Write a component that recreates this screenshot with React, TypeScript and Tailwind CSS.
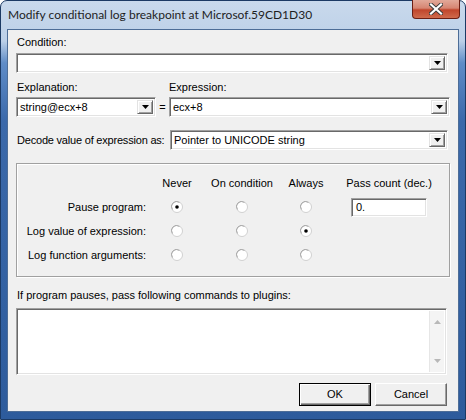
import React from "react";

const body = { fontFamily: '"Liberation Sans", Arial, sans-serif' };

const DropArrow = () => (
    <div className="w-[16px] h-full bg-[#f0f0f0] border border-t-[#e3e3e3] border-l-[#e3e3e3] border-r-[#696969] border-b-[#696969] shadow-[inset_1px_1px_0_#ffffff,inset_-1px_-1px_0_#a0a0a0] flex items-center justify-center">
        <svg width="7" height="4" viewBox="0 0 7 4">
            <path d="M0 0h7L3.5 4z" fill="#000" />
        </svg>
    </div>
);

const Combo = ({ value = "", className = "" }: { value?: string; className?: string }) => (
    <div
        className={`h-[20px] bg-white border border-t-[#a0a0a0] border-l-[#a0a0a0] border-r-white border-b-white shadow-[inset_1px_1px_0_#696969,inset_-1px_-1px_0_#e3e3e3] flex items-stretch p-[2px] ${className}`}
    >
        <span className="flex-1 text-[11px] leading-[14px] text-black pl-[1px] truncate">{value}</span>
        <DropArrow />
    </div>
);

const Radio = ({ checked = false }: { checked?: boolean }) => (
    <svg width="12" height="12" viewBox="0 0 12 12">
        <circle cx="6" cy="6" r="5.5" fill="#ffffff" stroke="#d0d0d0" />
        <path d="M1.5 8.5A5 5 0 0 1 8.5 1.5" fill="none" stroke="#a8a8a8" />
        {checked && <circle cx="6" cy="6" r="1.8" fill="#000" />}
    </svg>
);

const rows = [
    { label: "Pause program:", pick: 0, pass: true },
    { label: "Log value of expression:", pick: 2, pass: false },
    { label: "Log function arguments:", pick: -1, pass: false },
];

const Button = ({ label, primary = false }: { label: string; primary?: boolean }) => (
    <div
        className={`w-[72px] h-[23px] bg-[#f0f0f0] flex items-center justify-center text-[11px] text-black ${
            primary
                ? "border border-[#000000] shadow-[inset_1px_1px_0_#ffffff,inset_-1px_-1px_0_#696969,inset_-2px_-2px_0_#a0a0a0]"
                : "border border-t-white border-l-white border-r-[#696969] border-b-[#696969] shadow-[inset_-1px_-1px_0_#a0a0a0]"
        }`}
    >
        {label}
    </div>
);

export default function App() {
    return (
        <div className="w-[466px] h-[420px] bg-white">
            <div className="w-[466px] h-[420px] rounded-t-[7px] border border-[#1c3a64] bg-[linear-gradient(to_bottom,#c9d9ec_0px,#bcd0e8_40px,#5f8cc7_62px,#3b69aa_120px,#2d5b9c_420px)] flex flex-col">
                <div className="h-[28px] flex items-start justify-between pl-[7px] pr-[5px]">
                    <span
                        className="mt-[6px] text-[12px] leading-[16px] text-[#1e1e1e] whitespace-nowrap"
                        style={{ fontFamily: 'Lato, "Noto Sans", sans-serif' }}
                    >
                        Modify conditional log breakpoint at Microsof.59CD1D30
                    </span>
                    <div className="w-[48px] h-[19px] -mt-[1px] rounded-b-[4px] border border-[#6b1f14] border-t-0 bg-[linear-gradient(to_bottom,#e2a999_0%,#d68572_45%,#c0462c_55%,#cf6a4c_100%)] flex items-center justify-center">
                        <svg width="14" height="12" viewBox="0 0 14 12">
                            <path
                                d="M2 1.5L12 10.5M12 1.5L2 10.5"
                                stroke="#3a3a3a"
                                strokeWidth="4"
                                strokeLinecap="square"
                            />
                            <path
                                d="M2 1.5L12 10.5M12 1.5L2 10.5"
                                stroke="#ffffff"
                                strokeWidth="2.2"
                                strokeLinecap="square"
                            />
                        </svg>
                    </div>
                </div>

                <div
                    className="mx-[6px] h-[383px] bg-[#f0f0f0] border border-[#4d6d97] flex flex-col px-[8px] pt-[6px]"
                    style={body}
                >
                    <span className="text-[11px] leading-[13px] text-black pl-[1px]">Condition:</span>
                    <Combo className="mt-[4px] w-[432px]" />

                    <div className="mt-[8px] flex text-[11px] leading-[13px] text-black">
                        <span className="w-[153px] pl-[1px]">Explanation:</span>
                        <span>Expression:</span>
                    </div>
                    <div className="mt-[3px] flex items-center">
                        <Combo value="string@ecx+8" className="w-[140px]" />
                        <span className="w-[13px] text-center text-[11px] text-black">=</span>
                        <Combo value="ecx+8" className="flex-1" />
                    </div>

                    <div className="mt-[13px] flex items-center">
                        <span className="w-[154px] pl-[1px] text-[11px] leading-[13px] text-black whitespace-nowrap tracking-[-0.2px]">
                            Decode value of expression as:
                        </span>
                        <Combo value="Pointer to UNICODE string" className="w-[278px] shrink-0" />
                    </div>

                    <div className="mt-[13px] h-[114px] border border-[#a0a0a0] shadow-[inset_1px_1px_0_#ffffff,1px_1px_0_#ffffff] pt-[7px] text-[11px] text-black">
                        <div className="grid grid-cols-[129px_62px_68px_60px_106px] grid-rows-[24px_24px_24px_24px] items-center justify-items-center">
                            <span />
                            <span>Never</span>
                            <span>On condition</span>
                            <span>Always</span>
                            <span>Pass count (dec.)</span>
                            {rows.map((row) => (
                                <React.Fragment key={row.label}>
                                    <span className="justify-self-end">{row.label}</span>
                                    {[0, 1, 2].map((col) => (
                                        <span key={col} className="flex">
                                            <Radio checked={row.pick === col} />
                                        </span>
                                    ))}
                                    {row.pass ? (
                                        <div className="w-[76px] h-[19px] bg-white border border-t-[#a0a0a0] border-l-[#a0a0a0] border-r-white border-b-white shadow-[inset_1px_1px_0_#696969,inset_-1px_-1px_0_#e3e3e3] pl-[4px] leading-[17px]">
                                            0.
                                        </div>
                                    ) : (
                                        <span />
                                    )}
                                </React.Fragment>
                            ))}
                        </div>
                    </div>

                    <span className="mt-[12px] text-[11px] leading-[13px] text-black pl-[1px]">
                        If program pauses, pass following commands to plugins:
                    </span>
                    <div className="mt-[6px] w-[431px] h-[67px] bg-white border border-t-[#a0a0a0] border-l-[#a0a0a0] border-r-white border-b-white shadow-[inset_1px_1px_0_#696969,inset_-1px_-1px_0_#e3e3e3] flex justify-end p-[2px]">
                        <div className="w-[15px] h-full bg-[#f4f4f4] border-l border-[#e6e6e6] flex flex-col items-center justify-between py-[9px]">
                            <svg width="7" height="4" viewBox="0 0 7 4">
                                <path d="M0 4h7L3.5 0z" fill="#b8b8b8" />
                            </svg>
                            <svg width="7" height="4" viewBox="0 0 7 4">
                                <path d="M0 0h7L3.5 4z" fill="#b8b8b8" />
                            </svg>
                        </div>
                    </div>

                    <div className="mt-[8px] w-[431px] flex justify-end gap-[4px]">
                        <Button label="OK" primary />
                        <Button label="Cancel" />
                    </div>
                </div>
            </div>
        </div>
    );
}
